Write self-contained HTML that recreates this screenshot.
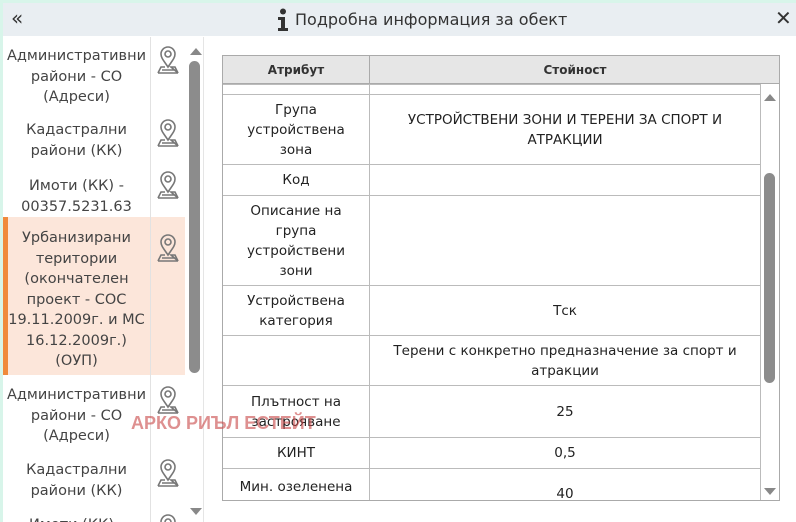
<!DOCTYPE html><html><head><meta charset="utf-8"><style>
*{box-sizing:border-box;margin:0;padding:0}
html,body{width:796px;height:522px;overflow:hidden}
body{background:#d8f5ea;font-family:"DejaVu Sans","Liberation Sans",sans-serif;position:relative;color:#333}
.win{position:absolute;left:3px;top:3px;width:793px;height:519px;background:#fff;overflow:hidden}
.hdr{position:absolute;left:0;top:0;width:793px;height:33px;background:#e9eef2}
.ttl{position:absolute;left:292px;top:7px;font-size:16px;color:#333}
.left{position:absolute;left:0;top:34px;width:182px;height:485px;overflow:hidden}
.it{position:absolute;left:0;width:182px;font-size:14.5px;line-height:20.5px;color:#444;text-align:center}
.it .t{position:absolute;left:0;width:147px}
.sel{background:#fce6da;border-left:5px solid #f08a3c}
.sb{position:absolute;background:#8c8c8c;border-radius:6px}
table{border-collapse:collapse;font-size:13.5px;color:#222}
td{border:1px solid #bbb;text-align:center;vertical-align:middle;line-height:20px}
</style></head><body>
<div class="win">
<div class="hdr">
<div style="position:absolute;left:8px;top:3px;font-size:20px;color:#333">«</div>
<svg style="position:absolute;left:272px;top:5px" width="14" height="24"><circle cx="8" cy="3.5" r="3" fill="#333"/><path d="M3 9h7v11h3v3H3v-3h3v-8H3z" fill="#333"/></svg>
<div class="ttl">Подробна информация за обект</div>
<div style="position:absolute;left:772px;top:3px;font-size:20px;color:#333;font-weight:bold">✕</div>
</div>
<div class="left">
<div class="it" style="top:9px;height:73px"><div class="t" style="top:0">Административни<br>райони - СО<br>(Адреси)</div></div>
<div class="it" style="top:83px;height:53px"><div class="t" style="top:0">Кадастрални<br>райони (КК)</div></div>
<div class="it" style="top:135px;height:53px"><div class="t" style="top:4px">Имоти (КК) -<br>00357.5231.63</div></div>
<div class="it sel" style="top:180px;height:158px;left:0"><div class="t" style="top:11px;left:-5px;width:147px">Урбанизирани<br>територии<br>(окончателен<br>проект - СОС<br>19.11.2009г. и МС<br>16.12.2009г.)<br>(ОУП)</div></div>
<div class="it" style="top:348px;height:73px"><div class="t" style="top:0">Административни<br>райони - СО<br>(Адреси)</div></div>
<div class="it" style="top:423px;height:53px"><div class="t" style="top:0">Кадастрални<br>райони (КК)</div></div>
<div class="it" style="top:476px;height:53px"><div class="t" style="top:2px">Имоти (КК) -</div></div>
<div style="position:absolute;left:147px;top:0;width:1px;height:485px;background:#e2e2e2"></div>
<svg width="30" height="485" style="position:absolute;left:150px;top:0" fill="none" stroke="#777" stroke-width="1.6">
<g id="p"><path d="M15 30c-4-6-7-9-7-13a7 7 0 0 1 14 0c0 4-3 7-7 13z"/><circle cx="15" cy="17" r="3"/><path d="M5 36l3-6h4M18 30h4l3 6zM5 36h20M9 33h12"/></g>
<use href="#p" y="73"/><use href="#p" y="125"/><use href="#p" y="188"/><use href="#p" y="340"/><use href="#p" y="413"/><use href="#p" y="468"/>
</svg>
</div>
<svg style="position:absolute;left:187px;top:44px" width="12" height="8"><path d="M0 8L6 1L12 8z" fill="#888"/></svg>
<div class="sb" style="left:186px;top:58px;width:11px;height:312px"></div>
<svg style="position:absolute;left:187px;top:505px" width="12" height="8"><path d="M0 0L6 7L12 0z" fill="#888"/></svg>
<div style="position:absolute;left:200px;top:34px;width:1px;height:485px;background:#e5e5e5"></div>
<div style="position:absolute;left:219px;top:52px;width:558px;height:446px;border:1px solid #aaa;overflow:hidden">
<div style="height:28px;background:#e6e6e6;border-bottom:1px solid #aaa;font-size:12px;font-weight:bold;color:#333;position:relative">
<div style="position:absolute;left:0;width:146px;top:7px;text-align:center">Атрибут</div>
<div style="position:absolute;left:146px;top:0;width:1px;height:28px;background:#aaa"></div>
<div style="position:absolute;left:147px;width:410px;top:7px;text-align:center">Стойност</div>
</div>
<table style="position:absolute;left:-1px;top:28px;width:539px;">
<tr style="height:10px"><td style="width:147px"></td><td></td></tr>
<tr style="height:70px"><td>Група<br>устройствена<br>зона</td><td>УСТРОЙСТВЕНИ ЗОНИ И ТЕРЕНИ ЗА СПОРТ И<br>АТРАКЦИИ</td></tr>
<tr style="height:31px"><td>Код</td><td></td></tr>
<tr style="height:90px"><td>Описание на<br>група<br>устройствени<br>зони</td><td></td></tr>
<tr style="height:50px"><td>Устройствена<br>категория</td><td>Тск</td></tr>
<tr style="height:50px"><td></td><td>Терени с конкретно предназначение за спорт и<br>атракции</td></tr>
<tr style="height:52px"><td>Плътност на<br>застрояване</td><td>25</td></tr>
<tr style="height:31px"><td>КИНТ</td><td>0,5</td></tr>
<tr style="height:50px"><td style="vertical-align:top;padding-top:8px">Мин. озеленена<br>площ</td><td>40</td></tr>
</table>
<svg style="position:absolute;left:541px;top:37px" width="12" height="8"><path d="M0 8L6 1L12 8z" fill="#888"/></svg>
<div class="sb" style="left:541px;top:117px;width:11px;height:210px"></div>
<svg style="position:absolute;left:541px;top:432px" width="12" height="8"><path d="M0 0L6 7L12 0z" fill="#888"/></svg>
</div>
<div style="position:absolute;left:128px;top:410px;font-size:18px;font-weight:bold;color:rgba(200,70,70,0.6);font-family:'Liberation Sans',sans-serif">АРКО РИЪЛ ЕСТЕЙТ</div>
</div>
</body></html>
